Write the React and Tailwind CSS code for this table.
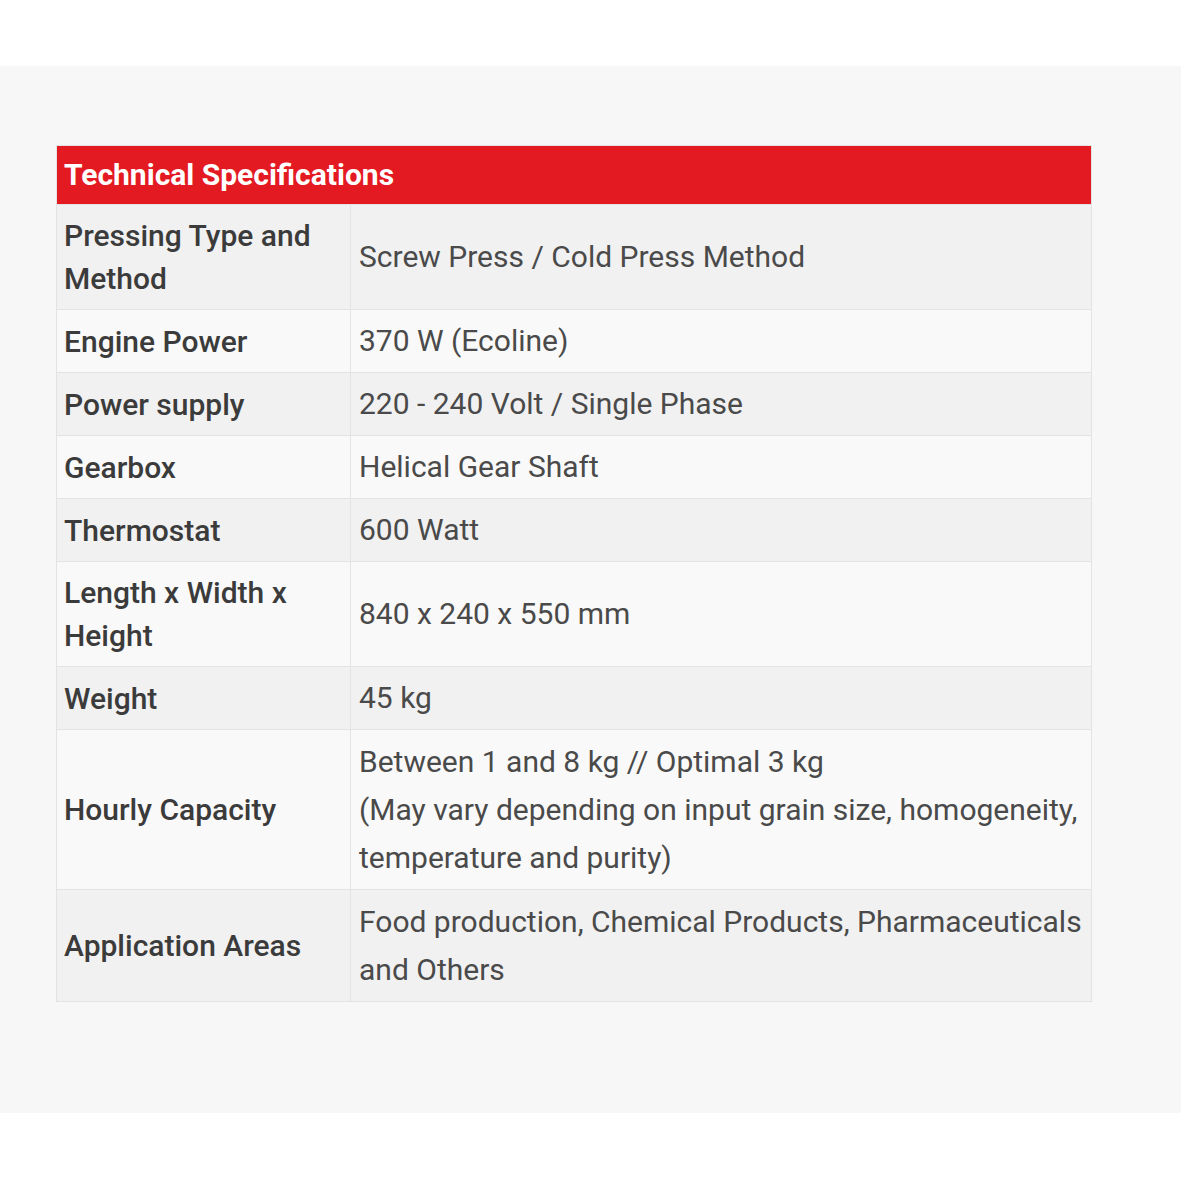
const rows = [
  { label: "Pressing Type and Method", value: ["Screw Press / Cold Press Method"] },
  { label: "Engine Power", value: ["370 W (Ecoline)"] },
  { label: "Power supply", value: ["220 - 240 Volt / Single Phase"] },
  { label: "Gearbox", value: ["Helical Gear Shaft"] },
  { label: "Thermostat", value: ["600 Watt"] },
  { label: "Length x Width x Height", value: ["840 x 240 x 550 mm"] },
  { label: "Weight", value: ["45 kg"] },
  {
    label: "Hourly Capacity",
    value: [
      "Between 1 and 8 kg // Optimal 3 kg",
      "(May vary depending on input grain size, homogeneity, temperature and purity)",
    ],
    tall: true,
  },
  {
    label: "Application Areas",
    value: ["Food production, Chemical Products, Pharmaceuticals and Others"],
    tall: true,
  },
];

const App = () => {
  return (
    <div className="min-h-[1181px] bg-white font-['Roboto',sans-serif]">
      <div className="h-[66px]"></div>
      <div className="bg-[#f7f7f7] pt-[79px] pb-[111px] px-[56px]">
        <table className="w-[1036px] border-collapse border border-[#e3e3e3] text-[30px]">
          <thead>
            <tr>
              <th
                colSpan={2}
                className="bg-[#e41a22] text-white text-left font-bold px-[7px] h-[59px] leading-[44px]"
              >
                Technical Specifications
              </th>
            </tr>
          </thead>
          <tbody>
            {rows.map((row, i) => (
              <tr
                key={row.label}
                className={i % 2 === 0 ? "bg-[#f1f1f1]" : "bg-[#f9f9f9]"}
              >
                <td className="w-[294px] border border-[#e3e3e3] px-[7px] py-[9px] font-medium text-[#3b3b3b] leading-[43px] align-middle">
                  {row.label}
                </td>
                <td
                  className={
                    "border border-[#e3e3e3] pl-[8px] pr-[4px] text-[#4a4a4a] align-middle " +
                    (row.tall ? "pt-[8px] pb-[7px] leading-[48px]" : "py-[9px] leading-[44px]")
                  }
                >
                  {row.value.map((v) => (
                    <div key={v}>{v}</div>
                  ))}
                </td>
              </tr>
            ))}
          </tbody>
        </table>
      </div>
    </div>
  );
};

export default App;
